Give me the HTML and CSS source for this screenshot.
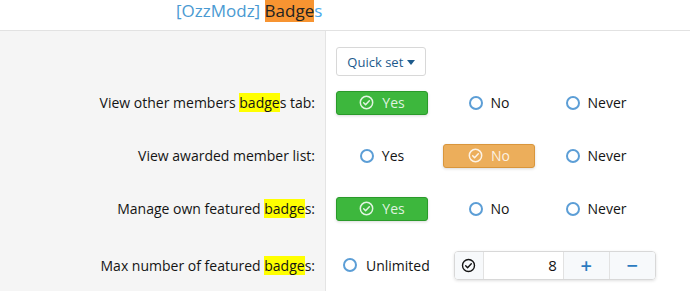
FILE: index.html
```html
<!DOCTYPE html>
<html lang="en">
<head>
    <meta charset="UTF-8">
    <meta name="viewport" content="width=device-width, initial-scale=1.0">
    <title>[OzzModz] Badges - Permissions</title>
    <link rel="stylesheet" href="styles.css">
</head>
<body>
<div class="page-header">
    <span class="addon-title">[OzzModz]</span> <span class="hl-title">Badge</span>s
</div>

<div class="perm-form">
    <!-- Quick set -->
    <div class="form-row row-quick">
        <div class="form-label"></div>
        <div class="form-input">
            <button class="btn-quick" type="button">Quick set <span class="caret"></span></button>
        </div>
    </div>

    <div class="form-row">
        <div class="form-label"><span>View other members <mark>badge</mark>s tab:</span></div>
        <div class="form-input options">
            <span class="opt opt-yes"><svg class="ic" viewBox="0 0 16 16"><circle cx="8" cy="8" r="6.6"/><path d="M5 8.3l2 2 4-4.2"/></svg>Yes</span>
            <span class="opt"><i class="radio"></i>No</span>
            <span class="opt"><i class="radio"></i>Never</span>
        </div>
    </div>

    <div class="form-row">
        <div class="form-label"><span>View awarded member list:</span></div>
        <div class="form-input options">
            <span class="opt"><i class="radio"></i>Yes</span>
            <span class="opt opt-no"><svg class="ic" viewBox="0 0 16 16"><circle cx="8" cy="8" r="6.6"/><path d="M5 8.3l2 2 4-4.2"/></svg>No</span>
            <span class="opt"><i class="radio"></i>Never</span>
        </div>
    </div>

    <div class="form-row">
        <div class="form-label"><span>Manage own featured <mark>badge</mark>s:</span></div>
        <div class="form-input options">
            <span class="opt opt-yes"><svg class="ic" viewBox="0 0 16 16"><circle cx="8" cy="8" r="6.6"/><path d="M5 8.3l2 2 4-4.2"/></svg>Yes</span>
            <span class="opt"><i class="radio"></i>No</span>
            <span class="opt"><i class="radio"></i>Never</span>
        </div>
    </div>

    <div class="form-row row-last">
        <div class="form-label"><span>Max number of featured <mark>badge</mark>s:</span></div>
        <div class="form-input">
            <span class="opt-plain"><i class="radio"></i>Unlimited</span>
            <div class="spinbox">
                <span class="spin-check"><svg viewBox="0 0 16 16"><circle cx="8" cy="8" r="6.4"/><path d="M5 8.3l2 2 4-4.2"/></svg></span>
                <span class="spin-value">8</span>
                <span class="spin-btn">+</span>
                <span class="spin-btn">&minus;</span>
            </div>
        </div>
    </div>
</div>
</body>
</html>
```

FILE: styles.css
```css
body {
    margin: 0;
    font-family: "Open Sans", "Noto Sans", sans-serif;
    font-size: 14px;
    color: #141414;
    background: #fff;
}
.page-header {
    height: 31px;
    border-bottom: 1px solid #e2e2e2;
    padding-left: 176px;
    font-size: 17px;
    line-height: 22px;
    color: #47a7eb;
    box-sizing: border-box;
}
.page-header .addon-title {
    color: #4a9ad2;
}
.page-header .hl-title {
    background: #f79431;
    color: #222;
}
.perm-form {
    display: flex;
    flex-direction: column;
}
.form-row {
    display: grid;
    grid-template-columns: 326px 1fr;
    height: 53px;
}
.form-row.row-quick {
    height: 45px;
}
.form-row.row-last {
    height: 60px;
}
.form-label {
    background: #f5f5f5;
    border-right: 1px solid #e4e4e4;
    text-align: right;
    padding-right: 10px;
    display: flex;
    align-items: center;
    justify-content: flex-end;
}
.form-label mark {
    background: #ffff00;
    color: inherit;
}
.form-input {
    display: flex;
    align-items: center;
    padding-left: 10px;
}
.row-quick .form-input {
    align-items: flex-end;
}
.btn-quick {
    font: inherit;
    font-size: 13px;
    color: #1d5a8c;
    background: #fff;
    border: 1px solid #d8d8d8;
    border-radius: 3px;
    height: 29px;
    width: 90px;
    padding: 0;
}
.caret {
    display: inline-block;
    border-left: 4px solid transparent;
    border-right: 4px solid transparent;
    border-top: 5px solid #1d5a8c;
    vertical-align: 2px;
}
.options {
    display: grid;
    grid-template-columns: repeat(3, 92px);
    column-gap: 15px;
}
.opt {
    display: flex;
    align-items: center;
    justify-content: center;
    height: 22px;
    gap: 8px;
}
.opt-yes, .opt-no {
    border-radius: 3px;
    color: rgba(255, 255, 255, 0.85);
    box-shadow: 0 1px 3px rgba(0, 0, 0, 0.15);
}
.opt-yes {
    background: #3db73d;
    border: 1px solid #2a9a2a;
}
.opt-no {
    background: #ecae5b;
    border: 1px solid #d9963c;
}
.ic {
    width: 15px;
    height: 15px;
    fill: none;
    stroke: rgba(255, 255, 255, 0.85);
    stroke-width: 1.6;
    stroke-linecap: round;
    stroke-linejoin: round;
}
.radio {
    width: 14px;
    height: 14px;
    border: 2px solid #5c9ed6;
    border-radius: 50%;
    box-sizing: border-box;
    background: #fff;
}
.opt-plain {
    display: flex;
    align-items: center;
    gap: 9px;
    margin-left: 7px;
}
.spinbox {
    display: flex;
    margin-left: 24px;
    height: 29px;
    border: 1px solid #d8d8d8;
    border-radius: 4px;
    box-shadow: 0 1px 3px rgba(0, 0, 0, 0.12);
    box-sizing: border-box;
    overflow: hidden;
}
.spinbox > span {
    display: flex;
    align-items: center;
    justify-content: center;
}
.spin-check {
    width: 28px;
    background: #f7f9fb;
    border-right: 1px solid #e2e2e2;
}
.spin-check svg {
    width: 15px;
    height: 15px;
    fill: none;
    stroke: #141414;
    stroke-width: 1.5;
    stroke-linecap: round;
    stroke-linejoin: round;
}
.spin-value {
    width: 79px;
    justify-content: flex-end !important;
    padding-right: 6px;
    box-sizing: border-box;
    font-size: 15px;
}
.spin-btn {
    width: 45px;
    background: #f7f9fb;
    border-left: 1px solid #e2e2e2;
    color: #2b7bc0;
    font-size: 20px;
    font-weight: 600;
}
```
